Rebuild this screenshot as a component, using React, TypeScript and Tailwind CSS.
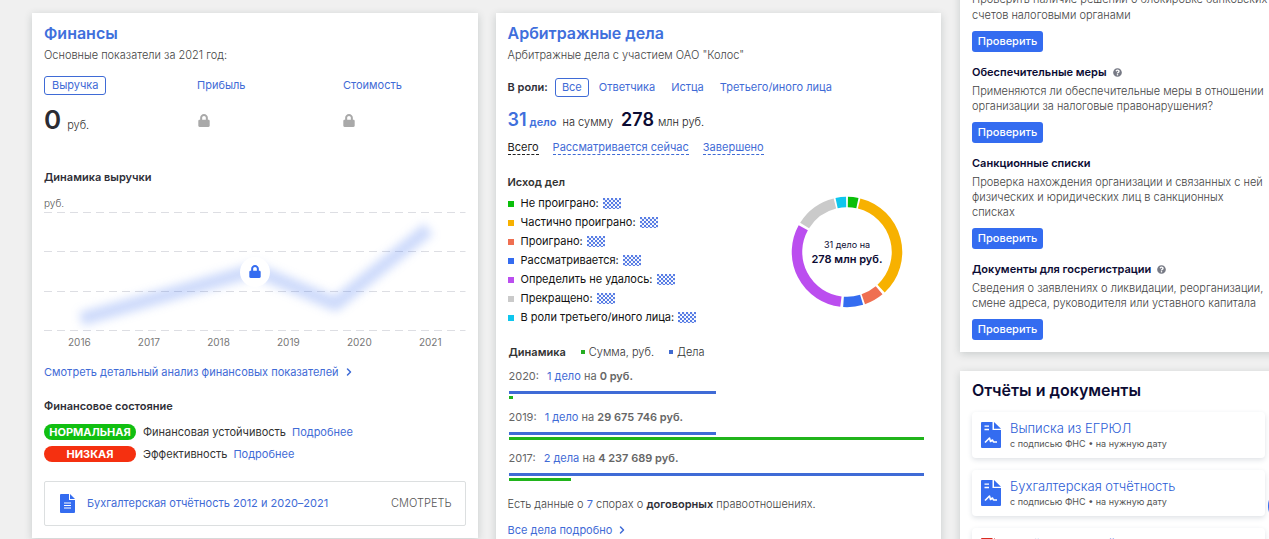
import React from 'react';
import { FaLock, FaQuestionCircle } from 'react-icons/fa';
import { ChevronRight } from 'lucide-react';

const outcomes = [
  { label: 'Не проиграно:', color: 'bg-[#0abf0a]' },
  { label: 'Частично проиграно:', color: 'bg-[#f7b100]' },
  { label: 'Проиграно:', color: 'bg-[#ef6f51]' },
  { label: 'Рассматривается:', color: 'bg-[#346cf0]' },
  { label: 'Определить не удалось:', color: 'bg-[#bb4eef]' },
  { label: 'Прекращено:', color: 'bg-[#cacaca]' },
  { label: 'В роли третьего/иного лица:', color: 'bg-[#0ec6ee]' },
];

// start and end angles in degrees, clockwise from 12 o'clock
const segments = [
  { from: 1, to: 12, color: '#0abf0a' },
  { from: 14, to: 137, color: '#f7b100' },
  { from: 140, to: 161, color: '#ef6f51' },
  { from: 163, to: 184, color: '#346cf0' },
  { from: 187, to: 299, color: '#bb4eef' },
  { from: 302, to: 346, color: '#cacaca' },
  { from: 348, to: 359, color: '#0ec6ee' },
];

const years = [
  { year: '2020', cases: '1 дело', sum: '0 руб.', casesShare: 50, sumShare: 1 },
  { year: '2019', cases: '1 дело', sum: '29 675 746 руб.', casesShare: 50, sumShare: 100 },
  { year: '2017', cases: '2 дела', sum: '4 237 689 руб.', casesShare: 100, sumShare: 15 },
];

const checks = [
  { title: 'Обеспечительные меры', help: true, lines: ['Применяются ли обеспечительные меры в отношении', 'организации за налоговые правонарушения?'] },
  { title: 'Санкционные списки', help: false, lines: ['Проверка нахождения организации и связанных с ней', 'физических и юридических лиц в санкционных', 'списках'] },
  { title: 'Документы для госрегистрации', help: true, lines: ['Сведения о заявлениях о ликвидации, реорганизации,', 'смене адреса, руководителя или уставного капитала'] },
];

const docs = [
  { title: 'Выписка из ЕГРЮЛ', note: 'с подписью ФНС • на нужную дату', color: 'text-[#346cf0]' },
  { title: 'Бухгалтерская отчётность', note: 'с подписью ФНС • на нужную дату', color: 'text-[#346cf0]' },
  { title: 'Отчёт налоговой', note: 'в формате PDF', color: 'text-[#d92b20]' },
];

const arc = (from: number, to: number) => {
  const point = (deg: number) => {
    const a = ((deg - 90) * Math.PI) / 180;
    return `${(56 + 50 * Math.cos(a)).toFixed(2)} ${(56 + 50 * Math.sin(a)).toFixed(2)}`;
  };
  return `M${point(from)} A50 50 0 ${to - from > 180 ? 1 : 0} 1 ${point(to)}`;
};

const Donut: React.FC = () => (
  <div className="relative w-28 h-28">
    <svg viewBox="0 0 112 112" className="w-28 h-28" fill="none" strokeWidth="10.5">
      {segments.map((s) => (
        <path key={s.color} d={arc(s.from, s.to)} stroke={s.color} />
      ))}
    </svg>
    <div className="absolute inset-0 flex flex-col items-center justify-center text-[#0b0b33]">
      <span className="text-[9px] leading-[14px]">31 дело на</span>
      <span className="text-[11px] leading-[14px] font-semibold whitespace-nowrap">278 млн руб.</span>
    </div>
  </div>
);

const Pattern: React.FC = () => (
  <svg width="18" height="11" className="shrink-0">
    <defs>
      <pattern id="dots" width="4" height="4" patternUnits="userSpaceOnUse">
        <circle cx="1" cy="1" r="1.2" fill="#5379e4" />
        <circle cx="3" cy="3" r="1.2" fill="#5379e4" />
      </pattern>
    </defs>
    <rect width="18" height="11" fill="url(#dots)" />
  </svg>
);

const SignedDoc: React.FC<{ className: string }> = ({ className }) => (
  <svg viewBox="0 0 20 26" className={`w-5 h-[26px] shrink-0 ${className}`}>
    <path d="M1 0h10.500v8H20v17a1 1 0 0 1-1 1H1a1 1 0 0 1-1-1V1a1 1 0 0 1 1-1z" fill="currentColor" />
    <path d="M13 0l7 6.800H13z" fill="currentColor" />
    <path d="M3.500 4.200h4.500M3.500 7.500h4.500" stroke="#fff" strokeWidth="1.300" />
    <path d="M4 20.500l4.500-4.500 1 3.500 2-1.500 1 2h3.500" stroke="#fff" strokeWidth="1.600" strokeLinejoin="round" fill="none" />
  </svg>
);

const FinanceChart: React.FC = () => (
  <div className="relative">
    <div className="h-[119px] flex flex-col justify-between">
      {[0, 1, 2, 3].map((i) => (
        <svg key={i} className="w-full h-px">
          <line x1="0" x2="100%" y1="0.5" y2="0.5" stroke="#dddee3" strokeDasharray="8 5" />
        </svg>
      ))}
    </div>
    <svg viewBox="0 0 421 119" preserveAspectRatio="none" className="absolute inset-0 w-full h-full overflow-visible blur-[5px]">
      <polyline points="37,107 211,58 291,92 384,17" fill="none" stroke="#3d6ff0" strokeOpacity="0.26" strokeWidth="14" strokeLinejoin="round" />
    </svg>
    <div className="absolute inset-0 flex items-center justify-center">
      <span className="w-[30px] h-[30px] rounded-full bg-white flex items-center justify-center">
        <FaLock className="w-3 h-[13px] text-[#346cf0]" />
      </span>
    </div>
  </div>
);

const Finance: React.FC = () => (
  <section className="flex-1 min-w-0 self-start bg-white shadow-[0_2px_8px_rgba(40,60,60,0.2)] px-3 pt-2 pb-3">
    <h2 className="text-[16px] leading-6 font-semibold text-[#406fdc]">Финансы</h2>
    <p className="mt-0.5 text-[11px] leading-4 font-light text-[#444]">Основные показатели за 2021 год:</p>
    <div className="mt-[13px] flex text-[11px] leading-[17px] text-[#3f6bd6]">
      <div className="w-[153px]">
        <button className="border border-[#3f6bd6] rounded-[3px] px-[7px]">Выручка</button>
      </div>
      <div className="w-[146px] py-px"><button>Прибыль</button></div>
      <div className="py-px"><button>Стоимость</button></div>
    </div>
    <div className="mt-[11px] h-7 flex text-[#a9a9a9]">
      <div className="w-[153px] flex items-baseline gap-1.5">
        <span className="text-[26px] leading-7 font-semibold text-[#2b2b33]">0</span>
        <span className="text-[11px] font-light text-[#333]">руб.</span>
      </div>
      <div className="w-[146px] pt-2 pl-px"><FaLock className="w-3 h-[13px]" /></div>
      <div className="pt-2"><FaLock className="w-3 h-[13px]" /></div>
    </div>
    <h3 className="mt-[35px] text-[11px] leading-4 font-semibold text-[#2f2f38]">Динамика выручки</h3>
    <p className="mt-[11px] mb-0.5 text-[10px] leading-[14px] font-light text-[#555]">руб.</p>
    <FinanceChart />
    <div className="mt-[3px] px-6 flex justify-between text-[10px] leading-4 text-[#777]">
      {['2016', '2017', '2018', '2019', '2020', '2021'].map((y) => (
        <span key={y}>{y}</span>
      ))}
    </div>
    <a href="#" className="mt-[14px] flex items-center gap-1 text-[11px] leading-4 text-[#3f6bd6]">
      Смотреть детальный анализ финансовых показателей <ChevronRight className="w-3 h-3" strokeWidth={3} />
    </a>
    <h3 className="mt-[18px] text-[11px] leading-4 font-semibold text-[#2f2f38]">Финансовое состояние</h3>
    <div className="mt-[10px] space-y-1.5 text-[11px] leading-4 text-[#333]">
      <div className="flex">
        <span className="w-[92px] mr-[7px] rounded-full bg-[#11bf11] text-white text-center font-bold">НОРМАЛЬНАЯ</span>
        Финансовая устойчивость
        <a href="#" className="ml-1.5 text-[#3f6bd6]">Подробнее</a>
      </div>
      <div className="flex">
        <span className="w-[92px] mr-[7px] rounded-full bg-[#f53010] text-white text-center font-bold">НИЗКАЯ</span>
        Эффективность
        <a href="#" className="ml-1.5 text-[#3f6bd6]">Подробнее</a>
      </div>
    </div>
    <a href="#" className="mt-[19px] h-[45px] flex items-center border border-[#dcdfe0] rounded-xs pl-[15px] pr-[13px] text-[11px] text-[#3f6bd6]">
      <svg viewBox="0 0 15 19" className="w-[15px] h-[19px] mr-3">
        <path d="M1 0h8v6h6v12a1 1 0 0 1-1 1H1a1 1 0 0 1-1-1V1a1 1 0 0 1 1-1z" fill="#346cf0" />
        <path d="M10 0v5h5z" fill="#346cf0" />
        <path d="M4 9h7M4 11.500h7M4 14h7" stroke="#fff" />
      </svg>
      Бухгалтерская отчётность 2012 и 2020–2021
      <span className="ml-auto font-light text-[#555]">СМОТРЕТЬ</span>
    </a>
  </section>
);

const Arbitration: React.FC = () => (
  <section className="flex-1 min-w-0 bg-white shadow-[0_2px_8px_rgba(40,60,60,0.2)] px-3 pt-2 pb-6">
    <h2 className="text-[16px] leading-6 font-semibold text-[#406fdc]">Арбитражные дела</h2>
    <p className="mt-0.5 text-[11px] leading-4 font-light text-[#444]">Арбитражные дела с участием ОАО "Колос"</p>
    <div className="mt-[15px] flex items-center text-[11px] leading-[17px] text-[#3f6bd6]">
      <span className="font-semibold text-[#2f2f38]">В роли:</span>
      <button className="ml-[7px] border border-[#3f6bd6] rounded-[3px] px-1.5">Все</button>
      <button className="ml-[10px]">Ответчика</button>
      <button className="ml-4">Истца</button>
      <button className="ml-4">Третьего/иного лица</button>
    </div>
    <div className="mt-[11px] h-6 flex items-baseline text-[11px] font-light text-[#222]">
      <span className="text-[18px] leading-6 font-semibold text-[#406fdc]">31</span>
      <span className="ml-[3px] font-semibold text-[#406fdc]">дело</span>
      <span className="ml-[6px]">на сумму</span>
      <span className="ml-2 text-[18px] leading-6 font-semibold text-[#0b0b33]">278</span>
      <span className="ml-1">млн руб.</span>
    </div>
    <div className="mt-2 flex gap-[14px] text-[11px] leading-[14px] text-[#3f6bd6]">
      <button className="border-b border-dashed border-[#222] text-[#222]">Всего</button>
      <button className="border-b border-dashed border-[#3f6bd6]">Рассматривается сейчас</button>
      <button className="border-b border-dashed border-[#3f6bd6]">Завершено</button>
    </div>
    <div className="mt-[19px] flex justify-between pr-[26px]">
      <div>
        <h3 className="text-[11px] leading-4 font-semibold text-[#333]">Исход дел</h3>
        <ul className="mt-1 text-[11px] leading-[19px] text-[#111]">
          {outcomes.map((o) => (
            <li key={o.label} className="flex items-center">
              <span className={`w-1.5 h-1.5 mr-[7px] ${o.color}`} />
              {o.label}
              <span className="ml-1"><Pattern /></span>
            </li>
          ))}
        </ul>
      </div>
      <div className="mt-[22px]"><Donut /></div>
    </div>
    <div className="mt-[17px] pl-px pr-[5px] text-[11px] leading-4 text-[#666]">
      <div className="flex items-center text-[#333]">
        <h3 className="font-semibold">Динамика</h3>
        <span className="w-1 h-1 ml-[15px] mr-1 bg-[#25ad22]" />
        <span className="font-light">Сумма, руб.</span>
        <span className="w-1 h-1 ml-[15px] mr-1 bg-[#406ad0]" />
        <span className="font-light">Дела</span>
      </div>
      {years.map((y) => (
        <div key={y.year} className="h-[41px] pt-2">
          <p>
            <span className="mr-2">{y.year}:</span>
            <a href="#" className="text-[#3f6bd6]">{y.cases}</a> на <b className="font-semibold">{y.sum}</b>
          </p>
          <div className="mt-[7px] h-[3px] bg-[#3f6bd6]" style={{ width: `${y.casesShare}%` }} />
          <div className="mt-0.5 h-[3px] bg-[#20b41b]" style={{ width: `${y.sumShare}%` }} />
        </div>
      ))}
    </div>
    <p className="mt-[13px] text-[11px] leading-4 font-light text-[#444]">
      Есть данные о <a href="#" className="font-normal text-[#3f6bd6]">7</a> спорах о <b className="font-semibold text-[#2f2f38]">договорных</b> правоотношениях.
    </p>
    <a href="#" className="mt-[10px] flex items-center gap-1 text-[11px] leading-4 text-[#3f6bd6]">
      Все дела подробно <ChevronRight className="w-3 h-3" strokeWidth={3} />
    </a>
  </section>
);

const CheckButton: React.FC = () => (
  <button className="mt-2 h-[21px] w-[71px] pb-0.5 rounded-[3px] bg-[#346cf0] text-white text-[11px] leading-4 font-medium">Проверить</button>
);

const Sidebar: React.FC = () => (
  <aside className="w-[317px] shrink-0 -mr-2 -mt-[30px]">
    <section className="bg-white shadow-[0_2px_8px_rgba(40,60,60,0.2)] pl-3 pt-2 pb-3 text-[11px]">
      <p className="leading-4 font-light text-[#444] whitespace-nowrap">Проверить наличие решений о блокировке банковских<br />счетов налоговыми органами</p>
      <CheckButton />
      {checks.map((c) => (
        <div key={c.title}>
          <h3 className="mt-3 leading-4 font-semibold text-[#0b0b33] flex items-center gap-1.5">
            {c.title}
            {c.help && <FaQuestionCircle className="w-[9px] h-[9px] text-[#777a85]" />}
          </h3>
          <p className="mt-1 leading-[15px] font-light text-[#444] whitespace-nowrap">
            {c.lines.map((l) => <span key={l} className="block">{l}</span>)}
          </p>
          <CheckButton />
        </div>
      ))}
    </section>
    <section className="mt-[19px] bg-white shadow-[0_2px_8px_rgba(40,60,60,0.2)] px-3 pt-[7px] pb-4">
      <h2 className="text-[16px] leading-6 font-semibold text-[#0b0b33]">Отчёты и документы</h2>
      <div className="mt-[10px] space-y-3">
        {docs.map((d) => (
          <a key={d.title} href="#" className="h-[46px] flex items-center pl-[9px] rounded-sm shadow-[0_2px_5px_rgba(40,60,90,0.15)]">
            <SignedDoc className={d.color} />
            <span className="ml-[9px]">
              <span className="block text-[13px] leading-[17px] font-light text-[#2b5cd6]">{d.title}</span>
              <span className="block text-[9px] leading-[13px] text-[#555]">{d.note}</span>
            </span>
          </a>
        ))}
      </div>
    </section>
  </aside>
);

export default function App() {
  return (
    <div className="relative h-screen overflow-hidden bg-[#f0f0f0] font-['Inter',sans-serif]">
      <div className="flex gap-[19px] pl-8">
        <main className="flex-1 min-w-0">
          {/* lower edge of the card scrolled out above */}
          <div className="h-0 mb-[13px] shadow-[0_1px_5px_rgba(40,60,60,0.3)]" />
          <div className="flex gap-[18px]">
            <Finance />
            <Arbitration />
          </div>
        </main>
        <div className="pt-[13px]"><Sidebar /></div>
      </div>
      <button aria-label="Чат" className="absolute -right-[39px] bottom-[13px] w-10 h-10 rounded-full bg-[#346cf0]" />
    </div>
  );
}
